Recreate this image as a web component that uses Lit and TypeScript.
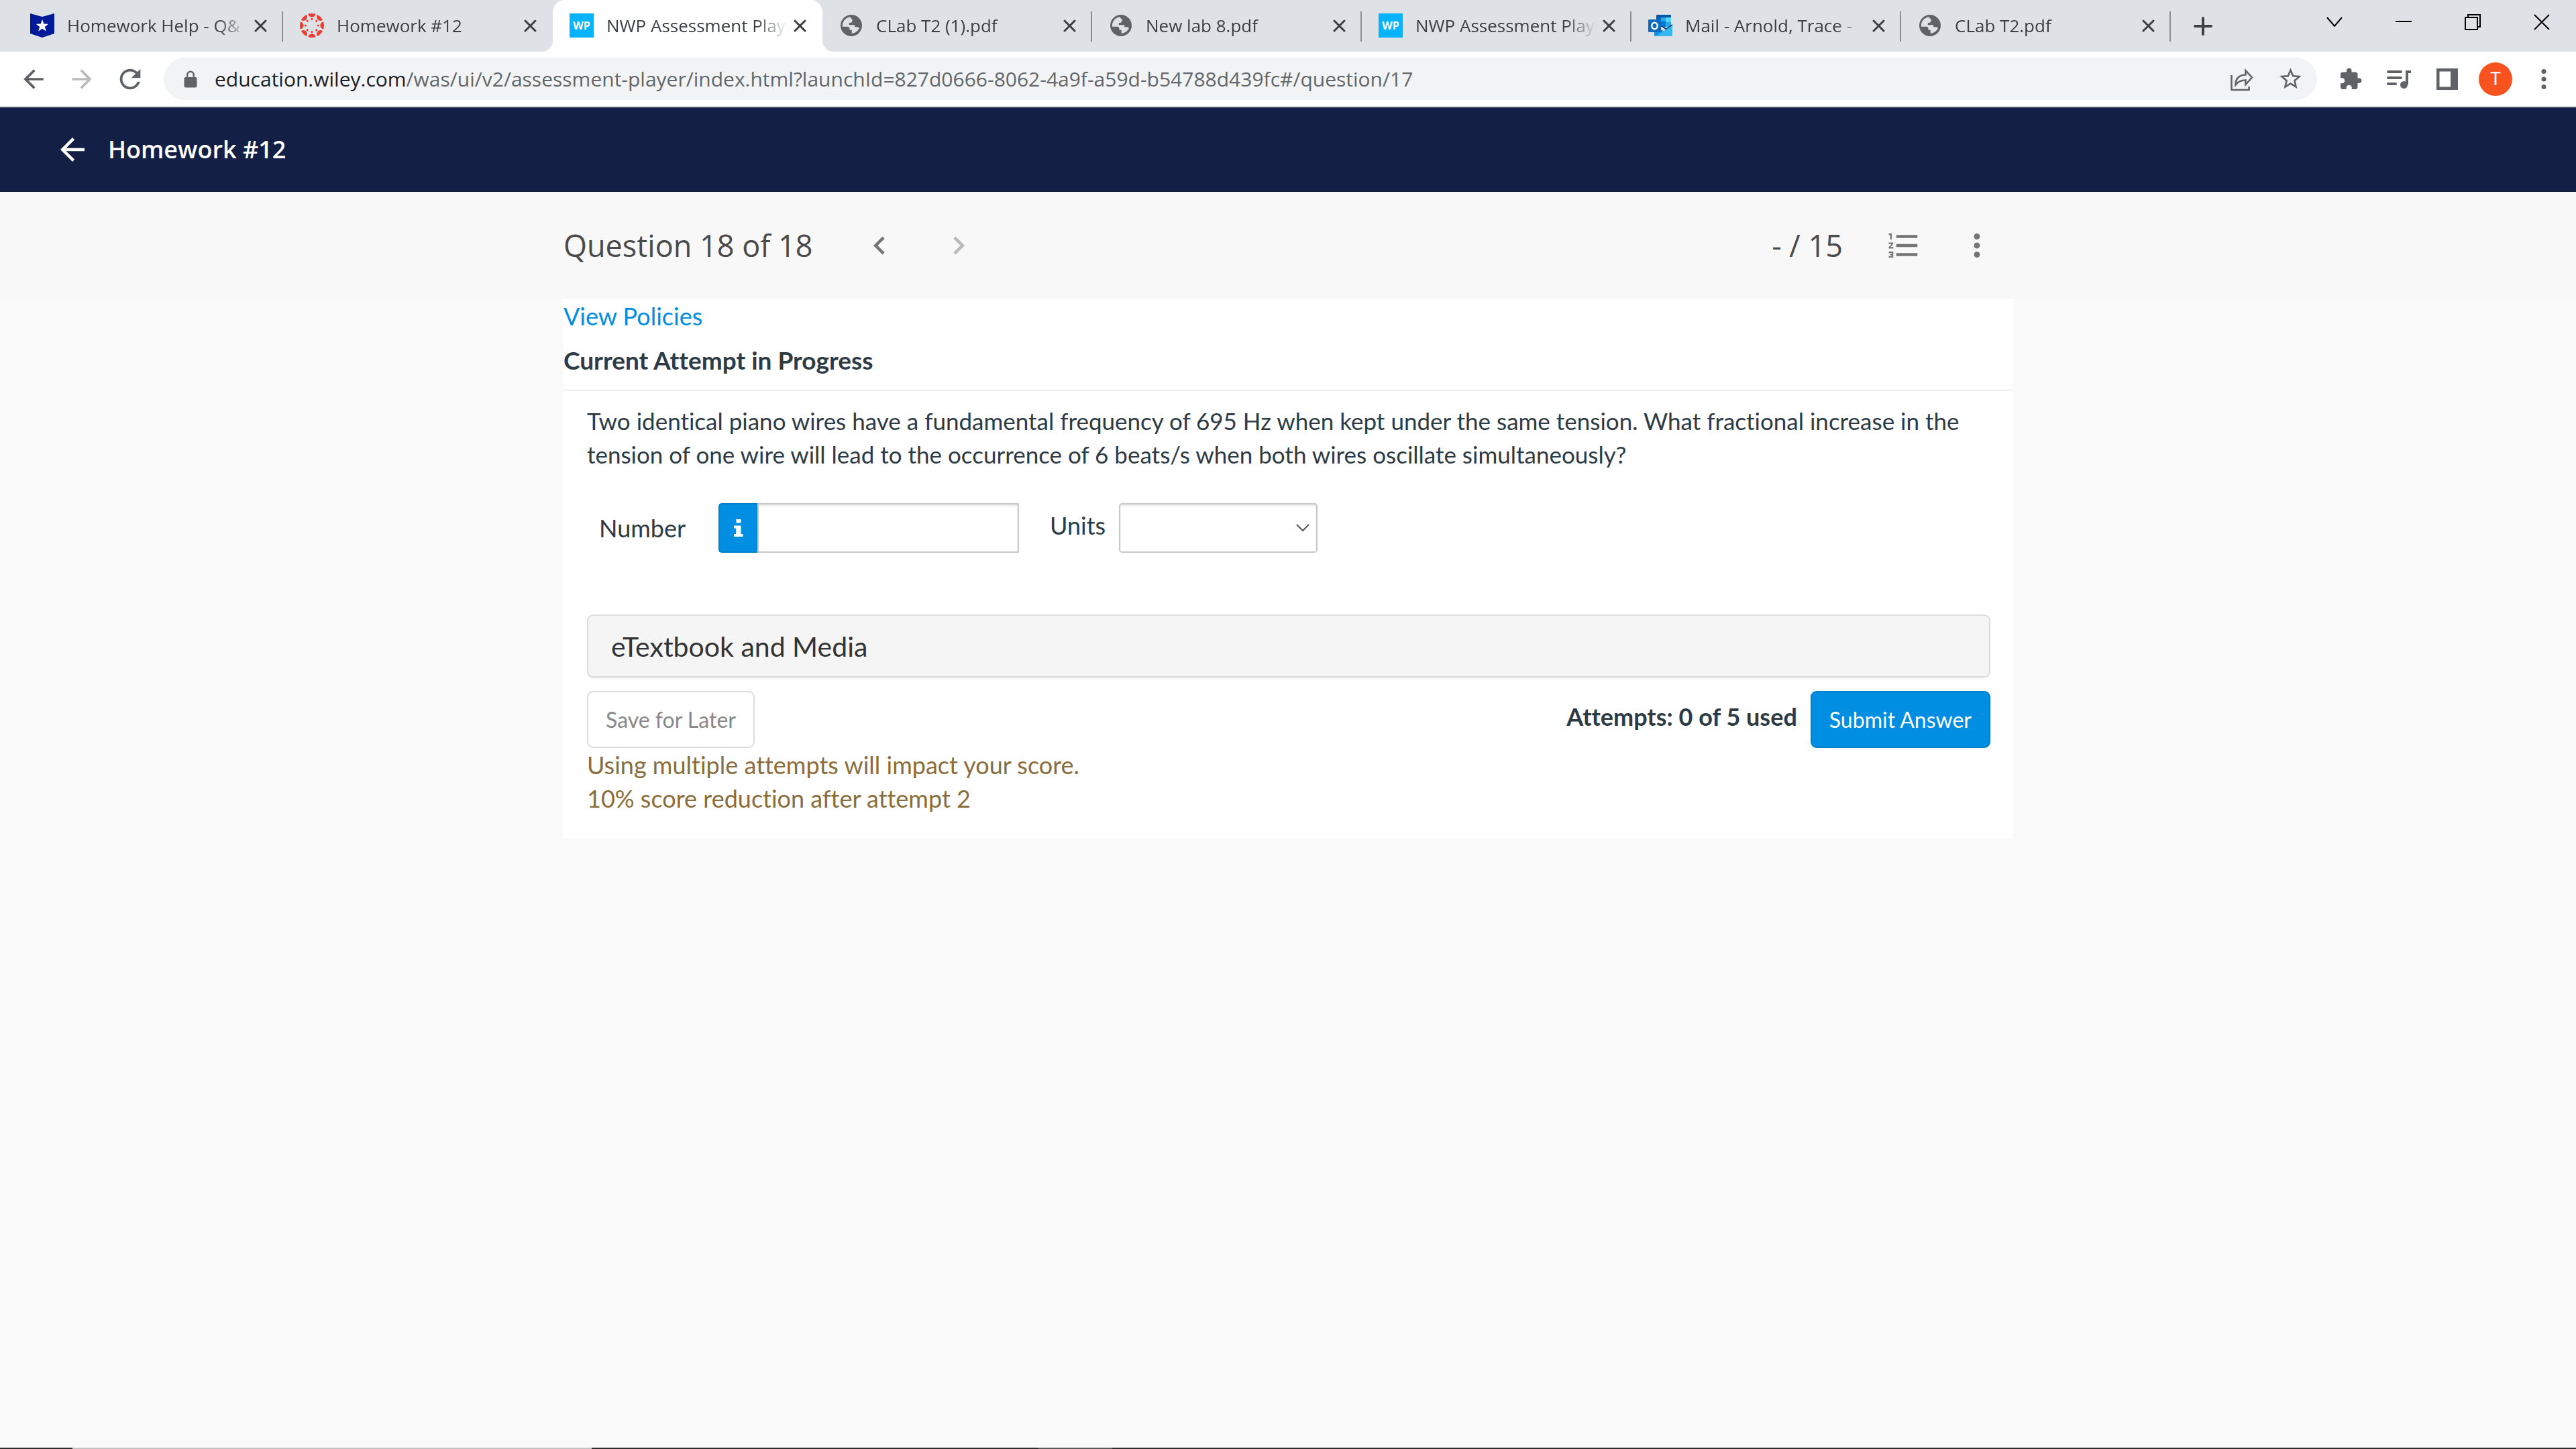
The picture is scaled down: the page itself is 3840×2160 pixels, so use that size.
import { LitElement, html, svg, css } from "lit";
import { customElement, property } from "lit/decorators.js";
import { classMap } from "lit/directives/class-map.js";

interface Tab {
  title: string;
  icon: "shield" | "canvas" | "wp" | "globe" | "outlook";
  active?: boolean;
  divider?: boolean;
}

const TABS: Tab[] = [
  { title: "Homework Help - Q&", icon: "shield", divider: true },
  { title: "Homework #12", icon: "canvas" },
  { title: "NWP Assessment Play", icon: "wp", active: true },
  { title: "CLab T2 (1).pdf", icon: "globe", divider: true },
  { title: "New lab 8.pdf", icon: "globe", divider: true },
  { title: "NWP Assessment Play", icon: "wp", divider: true },
  { title: "Mail - Arnold, Trace -", icon: "outlook", divider: true },
  { title: "CLab T2.pdf", icon: "globe", divider: true },
];

const ARROW_BACK = "M20 11H7.83l5.59-5.59L12 4l-8 8 8 8 1.41-1.41L7.83 13H20v-2z";
const ARROW_FORWARD = "M12 4l-1.41 1.41L16.17 11H4v2h12.17l-5.58 5.59L12 20l8-8z";
const REFRESH =
  "M17.65 6.35C16.2 4.9 14.21 4 12 4c-4.42 0-7.99 3.58-7.99 8s3.57 8 7.99 8c3.73 0 6.84-2.55 7.73-6h-2.08c-.82 2.33-3.04 4-5.65 4-3.31 0-6-2.69-6-6s2.69-6 6-6c1.66 0 3.14.69 4.22 1.78L13 11h7V4l-2.35 2.35z";
const STAR =
  "M22 9.24l-7.19-.62L12 2 9.19 8.63 2 9.24l5.46 4.73L5.82 21 12 17.27 18.18 21l-1.63-7.03L22 9.24zM12 15.4l-3.76 2.27 1-4.28-3.32-2.88 4.38-.38L12 6.1l1.71 4.04 4.38.38-3.32 2.88 1 4.28L12 15.4z";
const PUZZLE =
  "M20.5 11H19V7c0-1.1-.9-2-2-2h-4V3.5C13 2.12 11.88 1 10.5 1S8 2.12 8 3.5V5H4c-1.1 0-1.99.9-1.99 2v3.8H3.5c1.49 0 2.7 1.21 2.7 2.7s-1.21 2.7-2.7 2.7H2V20c0 1.1.9 2 2 2h3.8v-1.5c0-1.49 1.21-2.7 2.7-2.7 1.49 0 2.7 1.21 2.7 2.7V22H17c1.1 0 2-.9 2-2v-4h1.5c1.38 0 2.5-1.12 2.5-2.5S21.88 11 20.5 11z";
const CHEVRON_LEFT = "M15.41 7.41L14 6l-6 6 6 6 1.41-1.41L10.83 12z";
const CHEVRON_RIGHT = "M10 6L8.59 7.41 13.17 12l-4.58 4.59L10 18l6-6z";
const MORE =
  "M12 8c1.1 0 2-.9 2-2s-.9-2-2-2-2 .9-2 2 .9 2 2 2zm0 2c-1.1 0-2 .9-2 2s.9 2 2 2 2-.9 2-2-.9-2-2-2zm0 6c-1.1 0-2 .9-2 2s.9 2 2 2 2-.9 2-2-.9-2-2-2z";
const LIST =
  "M2 17h2v.5H3v1h1v.5H2v1h3v-4H2v1zm1-9h1V4H2v1h1v3zm-1 3h1.8L2 13.1v.9h3v-1H3.2L5 10.9V10H2v1zm5-6v2h14V5H7zm0 14h14v-2H7v2zm0-6h14v-2H7v2z";

const EIGHTHS = [0, 45, 90, 135, 180, 225, 270, 315];

const glyph = (path: string, size: number) => html`
  <svg width=${size} height=${size} viewBox="0 0 24 24" fill="currentColor" aria-hidden="true">
    <path d=${path}></path>
  </svg>
`;

const FAVICONS = {
  shield: html`
    <svg width="36" height="36" viewBox="0 0 36 36" aria-hidden="true">
      <path fill="#001a98" d="M0 0l18 5L36 0v30l-18 6L0 30z"></path>
      <path fill="#fff" d="M18 9l2.4 6.4 6.8.3-5.3 4.2 1.8 6.6L18 22.8l-5.7 3.7 1.8-6.6-5.3-4.2 6.800-.3z"></path>
    </svg>
  `,
  canvas: html`
    <svg width="36" height="36" viewBox="0 0 36 36" fill="#ea3f33" aria-hidden="true">
      <clipPath id="ring"><circle cx="18" cy="18" r="18"></circle></clipPath>
      <g clip-path="url(#ring)">
        ${EIGHTHS.map((a) => svg`<circle cx="18" cy="0" r="5.7" transform="rotate(${a} 18 18)"></circle>`)}
      </g>
      ${EIGHTHS.map((a) => svg`<circle cx="18" cy="8.4" r="1.6" transform="rotate(${a} 18 18)"></circle>`)}
    </svg>
  `,
  wp: html`<span class="wp">WP</span>`,
  globe: html`
    <svg width="36" height="36" viewBox="0 0 36 36" aria-hidden="true">
      <circle cx="18" cy="18" r="16" fill="#5f6368"></circle>
      <path
        fill="#dee1e6"
        d="M16.5 5.2C9.8 6 4.9 11.5 4.9 18c0 .7 0 1.200.1 1.700h7.600c1.800 0 2.900 1.100 2.900 2.800v2.300h3.200v4.900c5.100-.3 9.400-3.500 11.300-8-.8-1-2-1.500-3.500-1.500h-3.300v-2.900h-8.400v-3.400h1.700c1.900 0 3-1.100 3-2.900V9.300h1.900c-2.300-.5-4.200-1.700-4.900-4.100z"
      ></path>
    </svg>
  `,
  outlook: html`
    <svg width="36" height="36" viewBox="0 0 36 36" aria-hidden="true">
      <path fill="#0358a7" d="M12 3a1 1 0 0 1 1-1h20a1 1 0 0 1 1 1v4H12z"></path>
      <path fill="#0364b8" d="M12 6h7v17h-7z"></path>
      <path fill="#28a8ea" d="M19 6h7.500v6H19z"></path>
      <path fill="#50d9ff" d="M26.500 6H34v7h-7.500z"></path>
      <path fill="#0078d4" d="M19 12h7.500v8H19z"></path>
      <path fill="#28a8ea" d="M26.500 13H34v7h-7.500z"></path>
      <path fill="#123b6d" d="M19 19l8 6 9-7v-2l-9 6-8-4z"></path>
      <path fill="#1490df" d="M9 18l27 16H11a2 2 0 0 1-2-2z"></path>
      <path fill="#35b8f1" d="M36 18v14a2 2 0 0 1-2 2H11z"></path>
      <rect x="0" y="9" width="19" height="19" rx="1" fill="#0f6cbd"></rect>
      <ellipse cx="9.500" cy="18.500" rx="4.200" ry="4.800" fill="none" stroke="#fff" stroke-width="2.400"></ellipse>
    </svg>
  `,
};

@customElement("browser-tab")
class BrowserTab extends LitElement {
  @property({ attribute: false }) tab!: Tab;

  static styles = css`
    :host {
      display: block;
      flex: 0 1 402px;
      min-width: 0;
    }
    .tab {
      position: relative;
      box-sizing: border-box;
      height: 77px;
      display: flex;
      align-items: center;
      gap: 5px;
      padding: 0 24px 1px 25px;
      color: #3c4043;
      font: 26px/40px "Open Sans", "Noto Sans", sans-serif;
    }
    .active {
      background: #fff;
      border-radius: 18px 18px 0 0;
      z-index: 1;
    }
    .active::before,
    .active::after {
      content: "";
      position: absolute;
      bottom: 0;
      width: 18px;
      height: 18px;
    }
    .active::before {
      right: 100%;
      background: radial-gradient(circle at 0 0, transparent 18px, #fff 19px);
    }
    .active::after {
      left: 100%;
      background: radial-gradient(circle at 100% 0, transparent 18px, #fff 19px);
    }
    .divider::after {
      content: "";
      position: absolute;
      right: 0;
      top: 17px;
      width: 2px;
      height: 45px;
      background: #8b8e93;
    }
    .icon {
      flex: none;
      width: 36px;
      height: 36px;
      display: flex;
      margin-right: 14px;
    }
    .wp {
      width: 36px;
      height: 36px;
      background: #08b3fc;
      color: #fff;
      font: bold 16px/36px "Open Sans", sans-serif;
      text-align: center;
    }
    .title {
      flex: 1;
      min-width: 0;
      overflow: hidden;
      white-space: nowrap;
      mask-image: linear-gradient(to left, transparent 4px, #000 50px);
    }
    .close {
      flex: none;
      display: flex;
      padding: 0;
      border: 0;
      background: none;
      color: #3c4043;
    }
  `;

  render() {
    const t = this.tab;
    return html`
      <div class=${classMap({ tab: true, active: !!t.active, divider: !!t.divider })}>
        <span class="icon">${FAVICONS[t.icon]}</span>
        <span class="title">${t.title}</span>
        <button class="close" aria-label="Close tab">
          <svg width="19" height="19" viewBox="0 0 19 19" stroke="currentColor" stroke-width="3" stroke-linecap="round">
            <path d="M2 2l15 15M17 2L2 17"></path>
          </svg>
        </button>
      </div>
    `;
  }
}

@customElement("browser-chrome")
class BrowserChrome extends LitElement {
  static styles = css`
    :host {
      display: block;
      font-family: "Open Sans", "Noto Sans", sans-serif;
    }
    button {
      display: flex;
      align-items: center;
      justify-content: center;
      padding: 0;
      border: 0;
      background: none;
      color: #5f6368;
      font-family: inherit;
    }
    .strip {
      display: flex;
      background: #dee1e6;
      height: 77px;
      padding-left: 20px;
    }
    .tabs {
      display: flex;
      flex: 0 1 3216px;
      min-width: 0;
    }
    .add {
      flex: none;
      width: 56px;
      margin-left: 20px;
      color: #3c4043;
    }
    .window {
      display: flex;
      margin-left: auto;
      height: 66px;
    }
    .window button {
      width: 103px;
      color: #000;
    }
    .toolbar {
      display: flex;
      align-items: center;
      height: 81px;
      padding: 0 12px 0 14px;
      background: #fff;
      border-bottom: 2px solid #dadcdc;
    }
    .toolbar button {
      flex: none;
      width: 72px;
      height: 63px;
    }
    .toolbar .off {
      color: #bababa;
    }
    .address {
      flex: 1;
      min-width: 0;
      box-sizing: border-box;
      height: 63px;
      margin: 0 14px;
      padding: 0 4px 0 30px;
      display: flex;
      align-items: center;
      background: #f1f3f4;
      border-radius: 32px;
    }
    .lock {
      flex: none;
    }
    .url {
      flex: 1;
      min-width: 0;
      margin-left: 26px;
      overflow: hidden;
      white-space: nowrap;
      font-size: 30px;
      color: #63676b;
    }
    .host {
      color: #202124;
    }
    .avatar {
      width: 50px;
      height: 50px;
      border-radius: 50%;
      background: #f8521e;
      color: #fff;
      font: 27px/50px Roboto, sans-serif;
    }
  `;

  render() {
    return html`
      <div class="strip">
        <div class="tabs">${TABS.map((t) => html`<browser-tab .tab=${t}></browser-tab>`)}</div>
        <button class="add" aria-label="New tab">
          <svg width="28" height="28" viewBox="0 0 28 28" stroke="currentColor" stroke-width="4" stroke-linecap="round">
            <path d="M14 2v24M2 14h24"></path>
          </svg>
        </button>
        <div class="window">
          <button aria-label="Search tabs">
            <svg width="24" height="24" viewBox="0 0 24 24" fill="none" stroke="currentColor" stroke-width="2">
              <path d="M1 5l11 13L23 5"></path>
            </svg>
          </button>
          <button aria-label="Minimize">
            <svg width="24" height="24" viewBox="0 0 24 24"><path d="M0 10h24v2H0z"></path></svg>
          </button>
          <button aria-label="Restore">
            <svg width="24" height="24" viewBox="0 0 24 24" fill="none" stroke="currentColor" stroke-width="2">
              <path d="M1 5h18v18H1zM5 5V1h18v18h-4"></path>
            </svg>
          </button>
          <button aria-label="Close">
            <svg width="24" height="24" viewBox="0 0 24 24" stroke="currentColor" stroke-width="2">
              <path d="M1 1l22 22M23 1L1 23"></path>
            </svg>
          </button>
        </div>
      </div>
      <div class="toolbar">
        <button aria-label="Back">${glyph(ARROW_BACK, 44)}</button>
        <button class="off" aria-label="Forward">${glyph(ARROW_FORWARD, 44)}</button>
        <button aria-label="Reload">${glyph(REFRESH, 46)}</button>
        <div class="address">
          <svg class="lock" width="20" height="26" viewBox="0 0 20 26" aria-hidden="true">
            <path fill="none" stroke="#5f6368" stroke-width="2.400" d="M5.200 11V6.500a4.800 4.800 0 0 1 9.600 0V11"></path>
            <rect x="0.500" y="10" width="19" height="15.500" rx="2.500" fill="#5f6368"></rect>
          </svg>
          <span class="url"
            ><span class="host">education.wiley.com</span
            >/was/ui/v2/assessment-player/index.html?launchId=827d0666-8062-4a9f-a59d-b54788d439fc#/question/17</span
          >
          <button aria-label="Share">
            <svg width="36" height="36" viewBox="0 0 36 36" fill="none" stroke="currentColor" stroke-width="2.600">
              <path d="M2.500 12v22h26v-5"></path>
              <path d="M8.500 26.500c0-9 5-14.500 15-15V5l9.500 10.500L23.500 26v-6.500c-7 0-11.500 2-15 7z"></path>
            </svg>
          </button>
          <button aria-label="Bookmark">${glyph(STAR, 39)}</button>
        </div>
        <button aria-label="Extensions">${glyph(PUZZLE, 36)}</button>
        <button aria-label="Media controls">
          <svg width="36" height="32" viewBox="0 0 36 32" fill="none" stroke="currentColor" stroke-width="4" stroke-linecap="round">
            <path d="M2 5h19M2 14h19M2 23h11"></path>
            <path stroke-linecap="butt" d="M36 5h-6v19"></path>
            <circle cx="25.500" cy="24.500" r="4.500" fill="currentColor" stroke-width="2"></circle>
          </svg>
        </button>
        <button aria-label="Side panel">
          <svg width="32" height="32" viewBox="0 0 32 32" fill="currentColor" fill-rule="evenodd">
            <path d="M0 0h32v32H0zM4.500 4.500v23H21v-23z"></path>
          </svg>
        </button>
        <button aria-label="Profile"><span class="avatar">T</span></button>
        <button aria-label="Browser menu">
          <svg width="8" height="32" viewBox="0 0 8 32" fill="currentColor">
            <circle cx="4" cy="4.500" r="3.500"></circle>
            <circle cx="4" cy="16" r="3.500"></circle>
            <circle cx="4" cy="27.500" r="3.500"></circle>
          </svg>
        </button>
      </div>
    `;
  }
}

@customElement("app-root")
class AppRoot extends LitElement {
  static styles = css`
    :host {
      display: flex;
      flex-direction: column;
      min-height: 100vh;
      background: #fafafa;
      color: #2d3b45;
      font: 36px/50px Lato, sans-serif;
      font-variant-ligatures: none;
    }
    button {
      font-family: inherit;
      padding: 0;
      border: 0;
      background: none;
    }
    p,
    h1,
    h2 {
      margin: 0;
      font-size: inherit;
      font-weight: inherit;
    }
    .course {
      display: flex;
      align-items: center;
      gap: 26px;
      height: 126px;
      padding: 0 81px;
      background: #141f45;
      color: #fff;
      font-family: "Open Sans", sans-serif;
      font-weight: 600;
    }
    .course button {
      display: flex;
      color: #fff;
    }
    .question {
      background: #f8f8f8;
    }
    .bar,
    .card {
      box-sizing: border-box;
      max-width: 2160px;
      margin: 0 auto;
    }
    .bar {
      display: flex;
      align-items: center;
      height: 160px;
      padding-right: 8px;
      color: #4a4a4a;
      font-family: "Open Sans", sans-serif;
      font-size: 45px;
    }
    .bar button {
      width: 90px;
      height: 90px;
      display: flex;
      align-items: center;
      justify-content: center;
      color: #757575;
    }
    .bar button:disabled {
      color: #b9b9b9;
    }
    .pager {
      display: flex;
      gap: 28px;
      margin-left: 54px;
    }
    .score {
      margin-left: auto;
    }
    .tools {
      display: flex;
      gap: 19px;
      margin-left: 46px;
    }
    .card {
      width: 100%;
      padding-bottom: 35px;
      background: #fff;
    }
    .link {
      display: block;
      color: #008ee2;
      text-decoration: none;
    }
    .heading {
      margin-top: 16px;
      padding-bottom: 19px;
      border-bottom: 2px solid #eee;
      font-size: 37px;
      font-weight: bold;
    }
    .body {
      padding: 19px 33px 0 35px;
    }
    .prompt {
      font-size: 35px;
    }
    .answer {
      display: flex;
      align-items: center;
      margin: 48px 0 92px;
      padding-left: 18px;
    }
    .label {
      width: 178px;
    }
    .info {
      box-sizing: border-box;
      width: 58px;
      height: 74px;
      display: flex;
      align-items: center;
      justify-content: center;
      background: #008ee2;
      border: 2px solid #007fcb;
      border-right: 0;
      border-radius: 5px 0 0 5px;
    }
    .number,
    .unit {
      box-sizing: border-box;
      height: 74px;
      margin: 0;
      border: 2px solid #c7c7c7;
      background-color: #fff;
      box-shadow: inset 0 2px 3px #0000001a;
      font: inherit;
      color: inherit;
    }
    .number {
      width: 390px;
      padding: 0 16px;
      border-radius: 0;
    }
    .units {
      align-self: flex-start;
      margin: 0 20px 0 46px;
      line-height: 66px;
    }
    .picker {
      display: grid;
      align-items: center;
      justify-items: end;
    }
    .picker > * {
      grid-area: 1 / 1;
    }
    .unit {
      width: 296px;
      padding: 0 16px;
      appearance: none;
      border-radius: 5px;
    }
    .arrow {
      margin-right: 12px;
      pointer-events: none;
    }
    .media {
      display: block;
      box-sizing: border-box;
      width: 100%;
      height: 94px;
      padding: 0 34px;
      background: #f5f5f5;
      border: 2px solid #ddd;
      border-radius: 9px;
      box-shadow: 0 2px 2px #0000000d;
      color: #333;
      font-size: 41px;
      text-align: left;
    }
    .actions {
      display: flex;
      align-items: center;
      gap: 20px;
      margin-top: 20px;
    }
    .save,
    .submit {
      box-sizing: border-box;
      height: 85px;
      padding: 0 26px;
      border: 2px solid #ddd;
      border-radius: 9px;
      font-size: 32px;
      white-space: nowrap;
    }
    .save {
      margin-right: auto;
      color: #888;
      background: #fff;
    }
    .submit {
      color: #fff;
      background: #008ee2;
      border-color: #007fcb;
    }
    .attempts {
      align-self: flex-start;
      line-height: 76px;
      font-weight: bold;
    }
    .warning {
      color: #8a6d3b;
    }
    .taskbar {
      display: flex;
      height: 2px;
      margin-top: auto;
      background: #2f2d2e;
    }
    .task {
      width: 774px;
      margin-left: 108px;
      background: #c2c2c2;
    }
    .task + .task {
      width: 110px;
      margin-left: 666px;
      background: #5a5a5a;
    }
  `;

  render() {
    return html`
      <browser-chrome></browser-chrome>
      <header class="course">
        <button aria-label="Back to assignments">${glyph(ARROW_BACK, 54)}</button>
        <h1>Homework #12</h1>
      </header>
      <div class="question">
        <div class="bar">
          <h2>Question 18 of 18</h2>
          <div class="pager">
            <button aria-label="Previous question">${glyph(CHEVRON_LEFT, 54)}</button>
            <button aria-label="Next question" disabled>${glyph(CHEVRON_RIGHT, 54)}</button>
          </div>
          <span class="score">- / 15</span>
          <div class="tools">
            <button aria-label="Question list">${glyph(LIST, 54)}</button>
            <button aria-label="More options">${glyph(MORE, 54)}</button>
          </div>
        </div>
      </div>
      <main class="card">
        <a class="link" href="#policies">View Policies</a>
        <h2 class="heading">Current Attempt in Progress</h2>
        <div class="body">
          <p class="prompt">
            Two identical piano wires have a fundamental frequency of 695 Hz when kept under the same tension. What
            fractional increase in the tension of one wire will lead to the occurrence of 6 beats/s when both wires
            oscillate simultaneously?
          </p>
          <div class="answer">
            <label class="label" for="number">Number</label>
            <button class="info" aria-label="Number format">
              <svg width="14" height="26" viewBox="0 0 14 26" fill="#fff">
                <path d="M3.500 0h7v5.500h-7zM0 9.500h10.500V22H13.500v4H0v-4h3v-8.500H0z"></path>
              </svg>
            </button>
            <input class="number" id="number" type="text" />
            <label class="units" for="unit">Units</label>
            <div class="picker">
              <select class="unit" id="unit">
                <option></option>
              </select>
              <svg class="arrow" width="20" height="12" viewBox="0 0 20 12" fill="none" stroke="#555" stroke-width="2">
                <path d="M1 1l9 9 9-9"></path>
              </svg>
            </div>
          </div>
          <button class="media">eTextbook and Media</button>
          <div class="actions">
            <button class="save">Save for Later</button>
            <span class="attempts">Attempts: 0 of 5 used</span>
            <button class="submit">Submit Answer</button>
          </div>
          <p class="warning">Using multiple attempts will impact your score.<br />10% score reduction after attempt 2</p>
        </div>
      </main>
      <footer class="taskbar">
        <span class="task"></span>
        <span class="task"></span>
      </footer>
    `;
  }
}
